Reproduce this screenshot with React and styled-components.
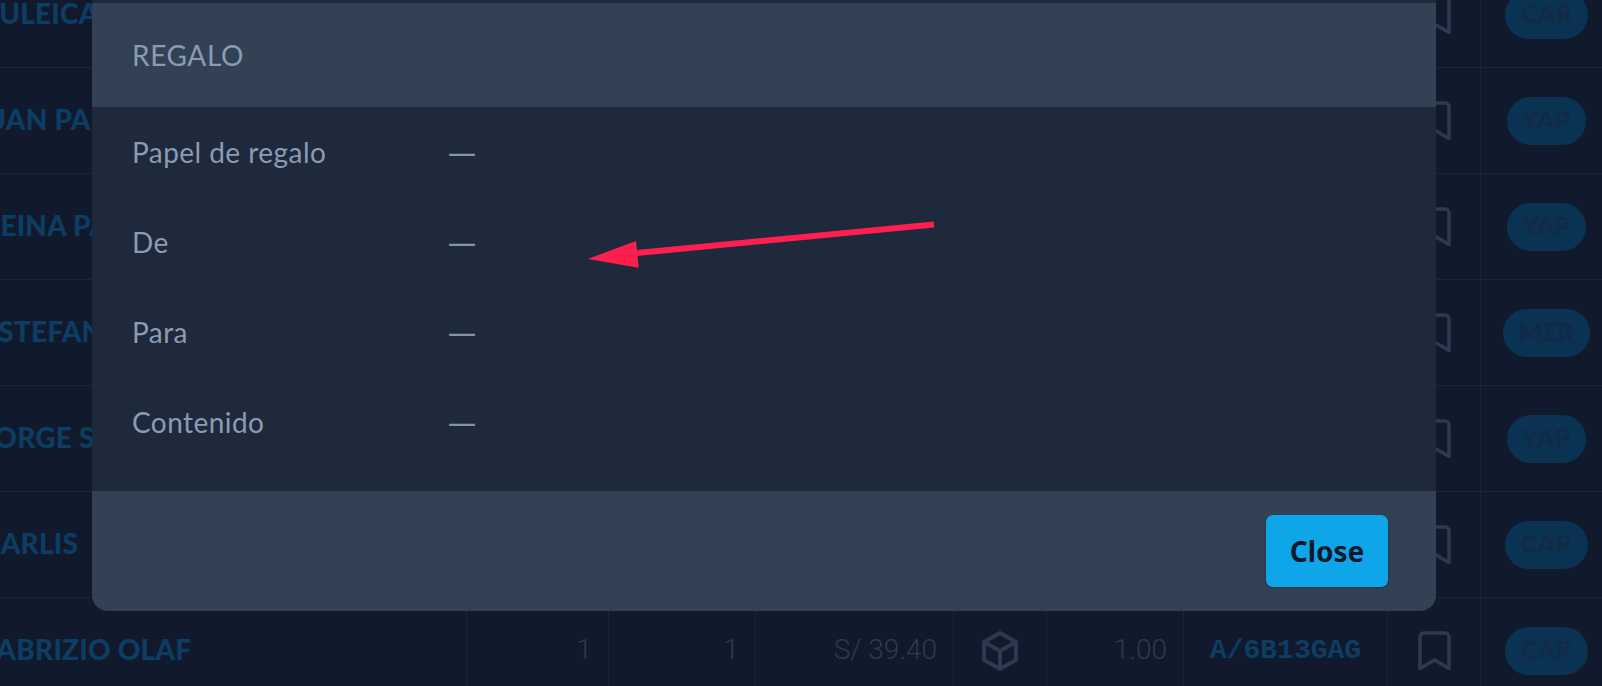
import React from 'react';
import styled, { createGlobalStyle } from 'styled-components';

const GlobalStyle = createGlobalStyle`
  html, body {
    margin: 0;
    height: 100%;
    overflow: hidden;
    background: #111a2c;
  }
`;

const Page = styled.div`
  position: relative;
  width: 1602px;
  height: 686px;
  overflow: hidden;
  font-family: Lato, "Noto Sans", sans-serif;
`;

const Table = styled.div`
  margin-top: -38px;
`;

const Row = styled.div`
  display: grid;
  grid-template-columns: 467px 142px 147px 198px 93px 137px 204px 93px 131px;
  height: 106px;
  box-sizing: border-box;
  border-bottom: 1px solid #1a2537;
`;

const Cell = styled.div`
  display: flex;
  align-items: center;
  justify-content: ${p => (p.$end ? 'flex-end' : 'center')};
  padding-right: ${p => (p.$end ? '16px' : '0')};
  padding-bottom: ${p => (p.$end ? '2px' : '0')};
  border-right: 1px solid #1a2537;
  color: #2c3a4f;
  font-family: Roboto, sans-serif;
  font-weight: 300;
  font-size: 28px;
  white-space: nowrap;
  &:last-child {
    border-right: 0;
  }
`;

const NameCell = styled.div`
  display: flex;
  align-items: center;
  padding-bottom: 3px;
  border-right: 1px solid #1a2537;
`;

const Name = styled.span`
  margin-left: ${p => p.$shift}px;
  color: #0d3d62;
  font-size: 28px;
  font-weight: 900;
  letter-spacing: 0.2px;
  white-space: nowrap;
`;

const Code = styled.span`
  color: #0d3d62;
  font-family: "Liberation Mono", monospace;
  font-size: 28px;
  font-weight: 700;
`;

const Pill = styled.span`
  display: inline-flex;
  align-items: center;
  height: 48px;
  box-sizing: border-box;
  padding: 0 15.5px 3px;
  border-radius: 24px;
  background: #0a3353;
  color: #122a47;
  font-family: Lato, sans-serif;
  font-size: 25px;
  font-weight: 900;
  letter-spacing: 0.3px;
`;

const Modal = styled.div`
  position: absolute;
  top: 0;
  left: 92px;
  width: 1344px;
  height: 611px;
  padding-top: 3px;
  box-sizing: border-box;
  border-radius: 0 0 16px 16px;
  background: #1e293b;
  overflow: hidden;
  display: flex;
  flex-direction: column;
`;

const ModalHeader = styled.div`
  display: flex;
  align-items: center;
  height: 104px;
  padding: 0 40px;
  background: #334155;
  color: #8a9cb4;
  font-size: 28px;
  letter-spacing: 0.6px;
`;

const ModalBody = styled.div`
  position: relative;
  flex: 1;
  padding: 0 40px;
`;

const InfoRow = styled.div`
  display: grid;
  grid-template-columns: 316px 1fr;
  align-items: center;
  height: 90px;
  color: #8a9cb4;
  font-size: 28px;
  letter-spacing: 0.45px;
`;

const Dash = styled.span`
  padding-bottom: 2px;
  color: #8593a8;
  font-family: "Noto Sans", sans-serif;
  letter-spacing: 0;
`;

const ModalFooter = styled.div`
  display: flex;
  justify-content: flex-end;
  align-items: center;
  height: 120px;
  padding: 0 48px;
  background: #334155;
`;

const CloseButton = styled.button`
  width: 122px;
  height: 72px;
  border: 0;
  border-radius: 7px;
  background: #0ea5e9;
  color: #0f172a;
  font-family: "Noto Sans", sans-serif;
  font-size: 28px;
  font-weight: 700;
  box-shadow: 0 1px 3px rgba(0, 0, 0, 0.2);
  cursor: pointer;
`;

const Arrow = styled.svg`
  position: absolute;
  left: 0;
  top: 0;
  pointer-events: none;
`;

const Bookmark = () => (
  <svg width="33" height="39" viewBox="0 0 33 39" fill="none" stroke="#2c3a4f" strokeWidth="3.5">
    <path d="M2 37.5V6a4 4 0 0 1 4-4h21a4 4 0 0 1 4 4v31.5L16.5 29Z" strokeLinejoin="round" />
  </svg>
);

const Cube = () => (
  <svg width="36" height="40" viewBox="0 0 36 40" fill="none" stroke="#2c3a4f" strokeWidth="4" strokeLinejoin="round">
    <path d="M18 2 34 11V29L18 38 2 29V11Z" />
    <path d="M2 11 18 20 34 11M18 20V38" />
  </svg>
);

const rows = [
  { name: 'ZULEICA', shift: -18, pill: 'CAR' },
  { name: 'JUAN PABLO', shift: -27, pill: 'YAP' },
  { name: 'REINA PAOLA', shift: -18, pill: 'YAP' },
  { name: 'ESTEFANY', shift: -18, pill: 'MER' },
  { name: 'JORGE SOTO', shift: -18, pill: 'YAP' },
  { name: 'CARLIS', shift: -18, pill: 'CAR' },
  { name: 'FABRIZIO OLAF', shift: -18, pill: 'CAR', full: true },
];

const fields = ['Papel de regalo', 'De', 'Para', 'Contenido'];

export default function App() {
  return (
    <Page>
      <GlobalStyle />
      <Table>
        {rows.map(r => (
          <Row key={r.name}>
            <NameCell><Name $shift={r.shift}>{r.name}</Name></NameCell>
            <Cell $end>{r.full && '1'}</Cell>
            <Cell $end>{r.full && '1'}</Cell>
            <Cell $end>{r.full && 'S/ 39.40'}</Cell>
            <Cell>{r.full && <Cube />}</Cell>
            <Cell $end>{r.full && '1.00'}</Cell>
            <Cell>{r.full && <Code>A/6B13GAG</Code>}</Cell>
            <Cell><Bookmark /></Cell>
            <Cell><Pill>{r.pill}</Pill></Cell>
          </Row>
        ))}
      </Table>
      <Modal>
        <ModalHeader>REGALO</ModalHeader>
        <ModalBody>
          {fields.map(f => (
            <InfoRow key={f}>
              <span>{f}</span>
              <Dash>—</Dash>
            </InfoRow>
          ))}
        </ModalBody>
        <ModalFooter>
          <CloseButton>Close</CloseButton>
        </ModalFooter>
        <Arrow width="1344" height="611">
          <path d="M842 224.5 L545 253" stroke="#ff1f4f" strokeWidth="6" fill="none" />
          <path d="M495.7 259 L544 241 L546.7 267.7 Z" fill="#ff1f4f" />
        </Arrow>
      </Modal>
    </Page>
  );
}
